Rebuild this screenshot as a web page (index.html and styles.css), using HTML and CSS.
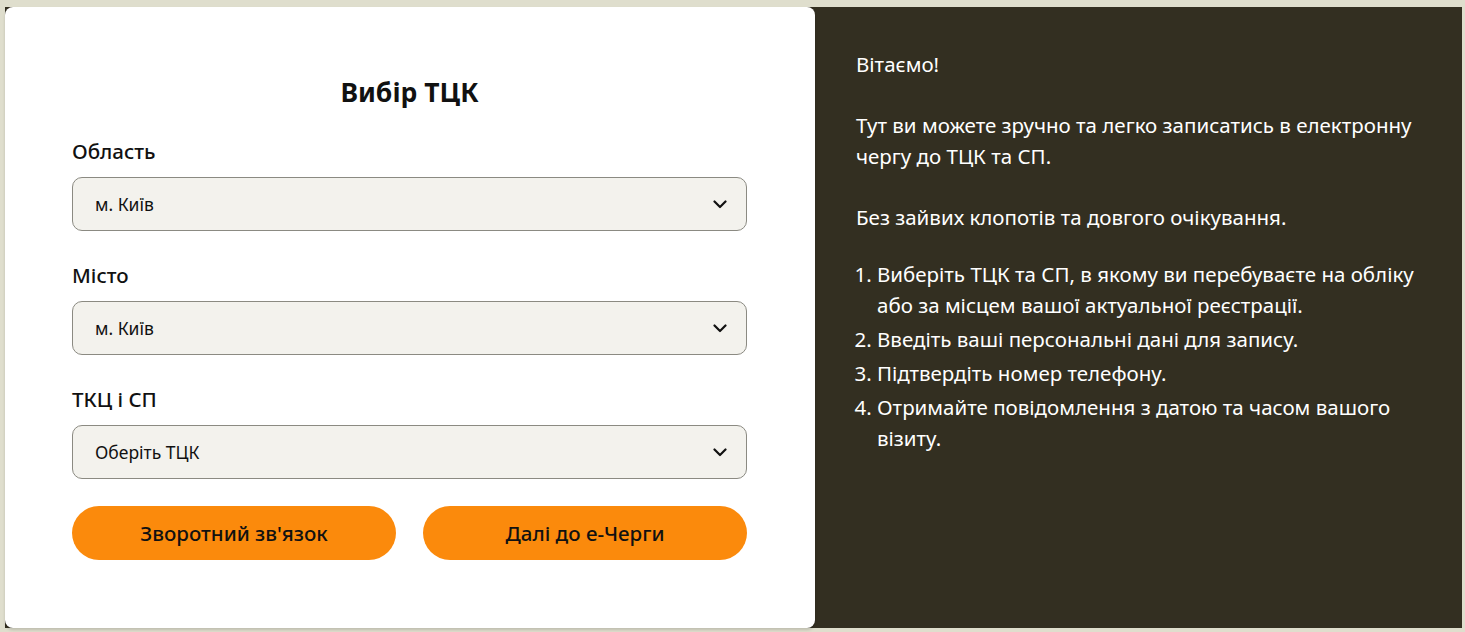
FILE: index.html
```html
<!DOCTYPE html>
<html lang="uk">
<head>
<meta charset="utf-8">
<title>Вибір ТЦК</title>
<link rel="stylesheet" href="styles.css">
</head>
<body>
<div class="page">
  <div class="wrap">
    <section class="card">
      <h1 class="title">Вибір ТЦК</h1>
      <div class="field">
        <label class="label">Область</label>
        <div class="select"><span>м. Київ</span>
          <svg class="chev" width="14" height="9" viewBox="0 0 14 9"><path d="M1.5 1.5 L7 7 L12.5 1.5" fill="none" stroke="#111" stroke-width="2.2" stroke-linecap="round" stroke-linejoin="round"/></svg>
        </div>
      </div>
      <div class="field">
        <label class="label">Місто</label>
        <div class="select"><span>м. Київ</span>
          <svg class="chev" width="14" height="9" viewBox="0 0 14 9"><path d="M1.5 1.5 L7 7 L12.5 1.5" fill="none" stroke="#111" stroke-width="2.2" stroke-linecap="round" stroke-linejoin="round"/></svg>
        </div>
      </div>
      <div class="field">
        <label class="label">ТКЦ і СП</label>
        <div class="select"><span>Оберіть ТЦК</span>
          <svg class="chev" width="14" height="9" viewBox="0 0 14 9"><path d="M1.5 1.5 L7 7 L12.5 1.5" fill="none" stroke="#111" stroke-width="2.2" stroke-linecap="round" stroke-linejoin="round"/></svg>
        </div>
      </div>
      <div class="buttons">
        <button class="btn">Зворотний зв'язок</button>
        <button class="btn">Далі до е-Черги</button>
      </div>
    </section>
    <aside class="info">
      <p>Вітаємо!</p>
      <p>Тут ви можете зручно та легко записатись в електронну чергу до ТЦК та СП.</p>
      <p>Без зайвих клопотів та довгого очікування.</p>
      <ol class="steps">
        <li>Виберіть ТЦК та СП, в якому ви перебуваєте на обліку або за місцем вашої актуальної реєстрації.</li>
        <li>Введіть ваші персональні дані для запису.</li>
        <li>Підтвердіть номер телефону.</li>
        <li>Отримайте повідомлення з датою та часом вашого візиту.</li>
      </ol>
    </aside>
  </div>
</div>
</body>
</html>
```
FILE: styles.css
```css
html, body {
  margin: 0;
  padding: 0;
  background: #dfdecd;
  font-family: "Noto Sans", "Open Sans", sans-serif;
  color: #111;
}
.page {
  padding: 7px 3px 0 5px;
  height: 632px;
  box-sizing: border-box;
  overflow: hidden;
}
.wrap {
  display: flex;
  height: 621px;
  background: #332f21;
}
.card {
  width: 810px;
  flex: none;
  background: #fff;
  border-radius: 8px;
  box-shadow: 0 2px 3px rgba(0,0,0,0.15);
  padding: 69px 68px 0 67px;
  box-sizing: border-box;
  display: flex;
  flex-direction: column;
}
.title {
  margin: 0 0 29px;
  text-align: center;
  font-size: 26.5px;
  font-weight: 700;
  line-height: 32px;
}
.field {
  display: flex;
  flex-direction: column;
  margin-bottom: 30px;
}
.label {
  font-size: 20.5px;
  font-weight: 500;
  line-height: 28px;
  margin-bottom: 12px;
}
.select {
  height: 54px;
  box-sizing: border-box;
  border: 1px solid #8b8a82;
  border-radius: 10px;
  background: #f3f2ed;
  display: flex;
  align-items: center;
  justify-content: space-between;
  padding: 0 19px 0 22px;
  font-size: 17.5px;
}
.buttons {
  display: flex;
  gap: 27px;
  margin-top: -3px;
}
.btn {
  flex: 1;
  height: 54px;
  border: none;
  border-radius: 27px;
  background: #fb8a0c;
  color: #111;
  font-family: inherit;
  font-size: 20.5px;
  font-weight: 500;
}
.info {
  flex: 1;
  color: #fff;
  padding: 42px 44px 0 41px;
  font-size: 20.5px;
  line-height: 31px;
}
.info p {
  margin: 0 0 30px;
}
.steps {
  margin: -4px 0 0;
  padding-left: 21px;
}
.steps li {
  margin-bottom: 3px;
}
```
